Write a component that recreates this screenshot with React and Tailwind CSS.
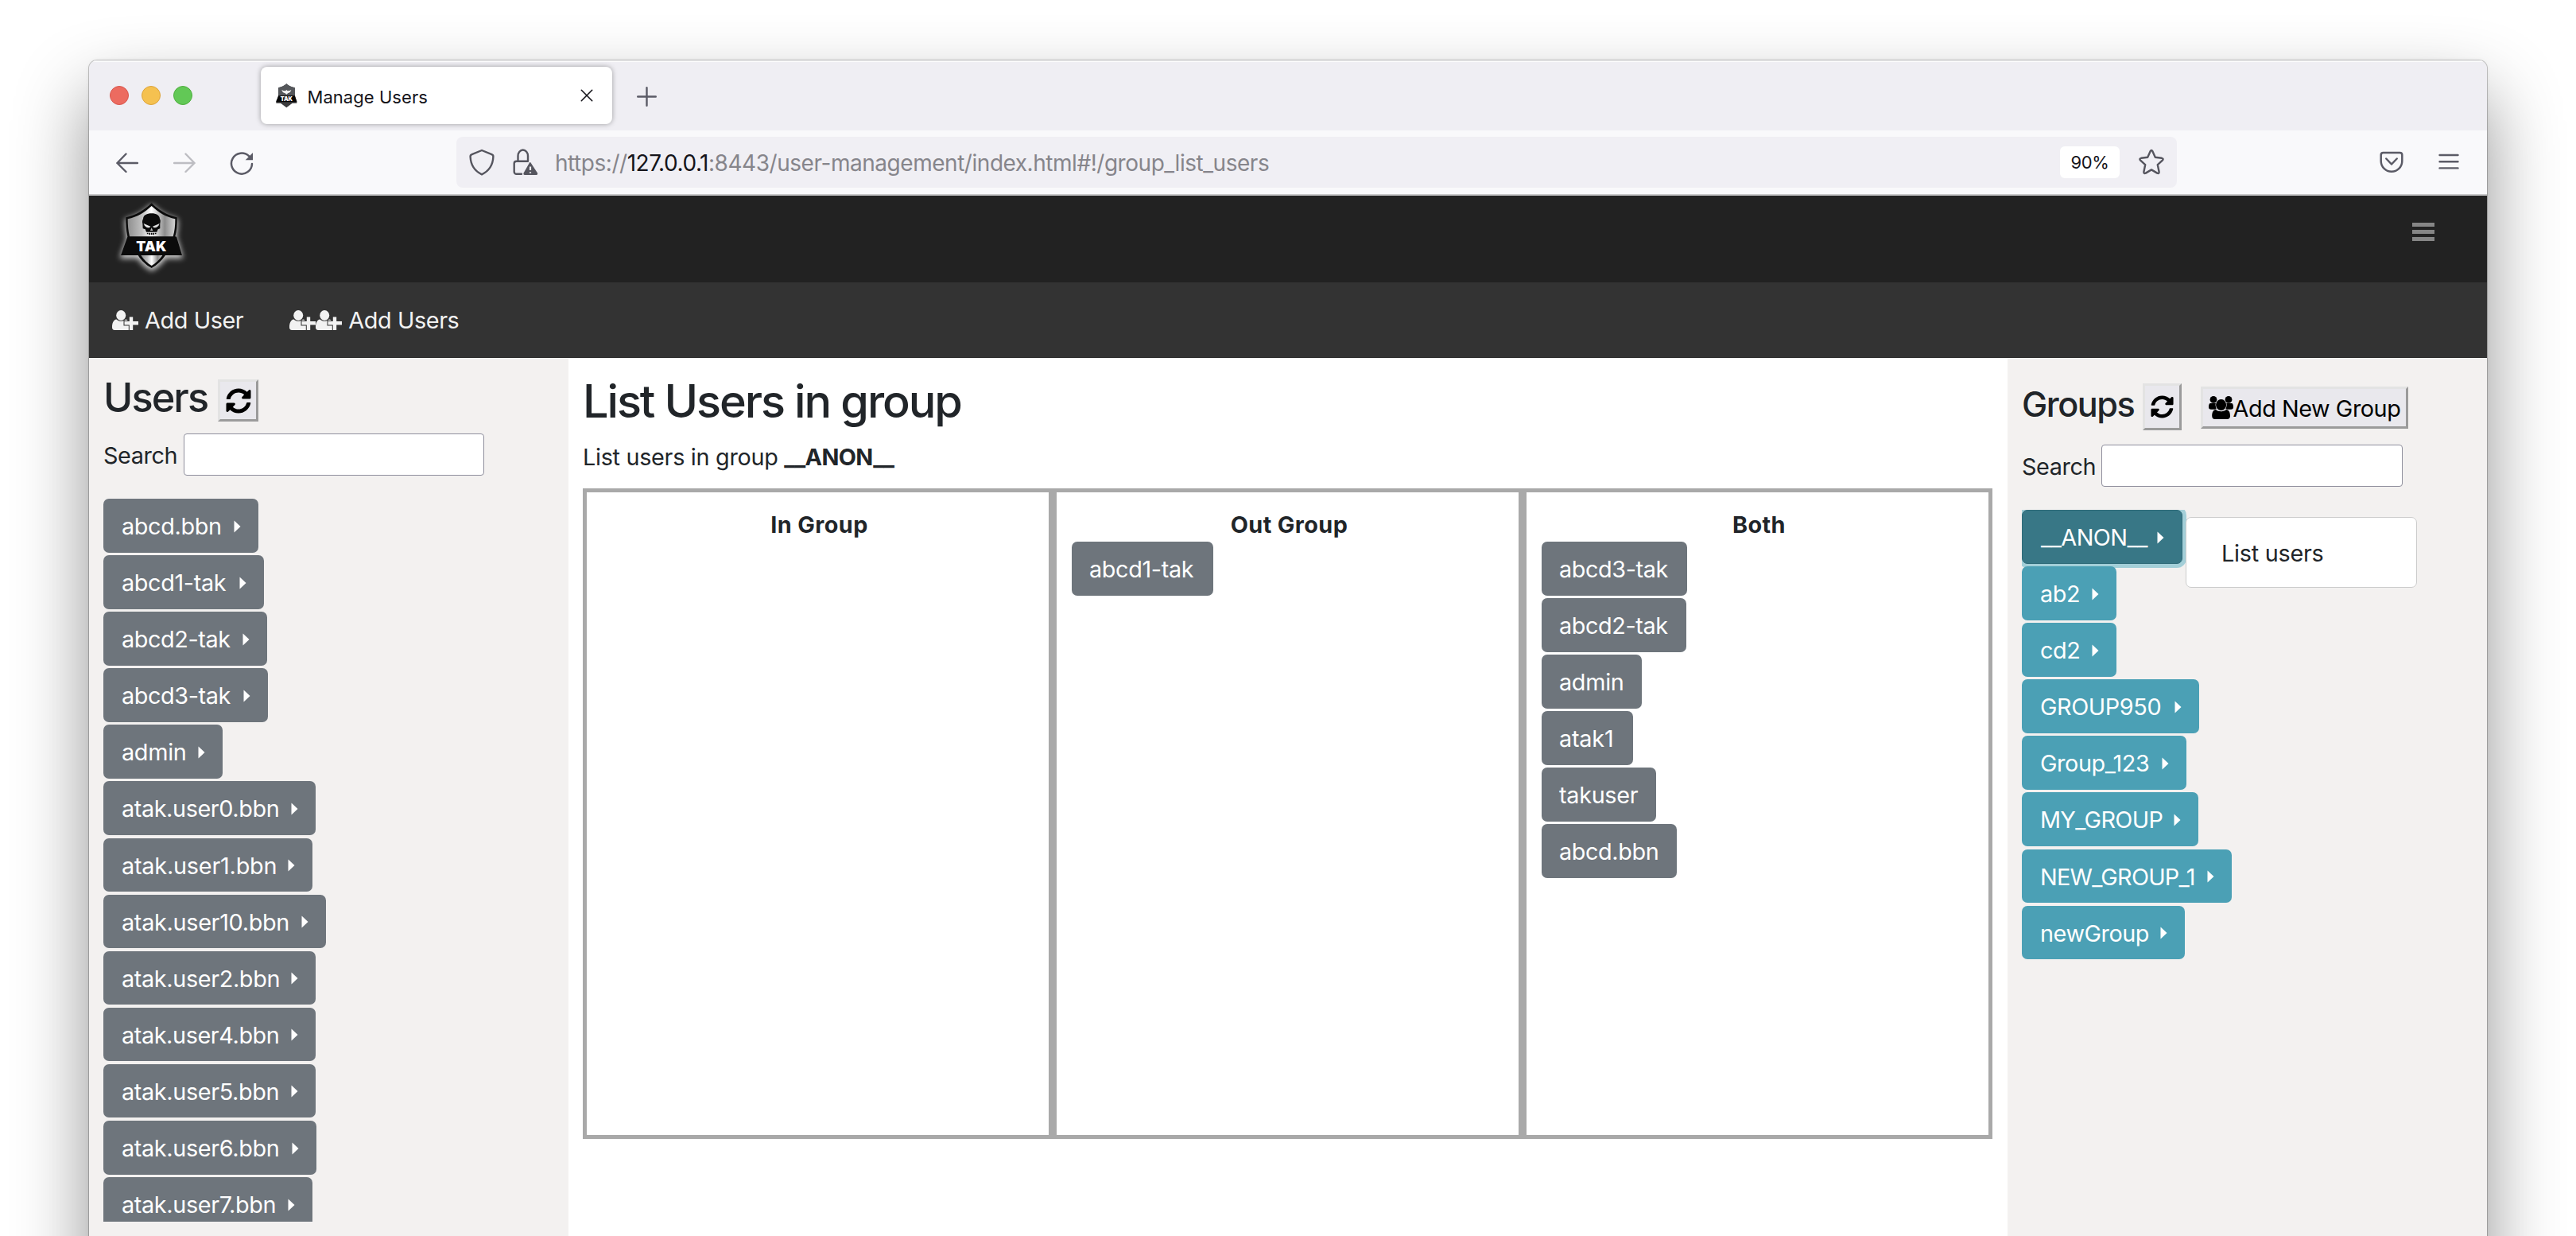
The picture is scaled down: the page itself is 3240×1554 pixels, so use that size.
import React from "react";
import { FaSyncAlt } from "react-icons/fa";

const users = [
  ["abcd.bbn", "w-[195px] tracking-[-0.35px]"],
  ["abcd1-tak", "w-[202px] tracking-[-0.35px]"],
  ["abcd2-tak", "w-[206px] tracking-[-0.4px]"],
  ["abcd3-tak", "w-[207px] tracking-[-0.4px]"],
  ["admin", "w-[150px] tracking-[-0.3px]"],
  ["atak.user0.bbn", "w-[267px] tracking-[-0.4px]"],
  ["atak.user1.bbn", "w-[263px] tracking-[-0.2px]"],
  ["atak.user10.bbn", "w-[280px] tracking-[-0.3px]"],
  ["atak.user2.bbn", "w-[267px] tracking-[-0.35px]"],
  ["atak.user4.bbn", "w-[267px] tracking-[-0.4px]"],
  ["atak.user5.bbn", "w-[267px] tracking-[-0.35px]"],
  ["atak.user6.bbn", "w-[268px] tracking-[-0.35px]"],
  ["atak.user7.bbn", "w-[263px] tracking-[-0.35px]"],
];

const groups = [
  ["__ANON__", "w-[202px] tracking-[-0.5px]", true],
  ["ab2", "w-[119px] tracking-[-0.4px]"],
  ["cd2", "w-[119px] tracking-[-0.4px]"],
  ["GROUP950", "w-[223px] tracking-[-0.4px]"],
  ["Group_123", "w-[207px] tracking-[-0.4px]"],
  ["MY_GROUP", "w-[222px] tracking-[-0.65px]"],
  ["NEW_GROUP_1", "w-[264px] tracking-[-0.75px]"],
  ["newGroup", "w-[205px] tracking-[-0.45px]"],
];

const columns = [
  ["In Group", []],
  ["Out Group", [["abcd1-tak", "w-[178px] tracking-[-0.35px]"]]],
  [
    "Both",
    [
      ["abcd3-tak", "w-[183px] tracking-[-0.4px]"],
      ["abcd2-tak", "w-[182px] tracking-[-0.4px]"],
      ["admin", "w-[126px] tracking-[-0.3px]"],
      ["atak1", "w-[115px] tracking-[-0.2px]"],
      ["takuser", "w-[144px] tracking-[-0.3px]"],
      ["abcd.bbn", "w-[170px] tracking-[-0.4px]"],
    ],
  ],
];

function Caret() {
  return (
    <svg width="9" height="16" viewBox="0 0 9 16" fill="currentColor">
      <path d="M0.5 0.5 8.5 8 0.5 15.5Z" />
    </svg>
  );
}

function Logo() {
  const outline =
    "M182 28C208 54 240 74 278 82C279 110 277 134 271 154L276 155L297 225H234C221 245 202 262 182 273C161 262 143 245 131 225H66L91 155L91 154C86 130 84 106 85 82C124 74 155 54 182 28Z";
  return (
    <svg width="120" height="109" viewBox="0 0 360 327" className="overflow-visible">
      <defs>
        <linearGradient id="steel" x1="0" x2="1">
          <stop offset="0" stopColor="#8f8f8f" />
          <stop offset="0.3" stopColor="#c0c0c0" />
          <stop offset="0.5" stopColor="#ffffff" />
          <stop offset="0.78" stopColor="#8c8c8c" />
          <stop offset="1" stopColor="#d5d5d5" />
        </linearGradient>
        <filter id="glow" x="-30%" y="-30%" width="160%" height="160%">
          <feGaussianBlur stdDeviation="11" />
        </filter>
      </defs>
      <path d={outline} fill="#fff" stroke="#fff" strokeWidth="6" opacity="0.8" transform="translate(0 8)" filter="url(#glow)" />
      <path d={outline} fill="#0b0b0b" />
      <path d="M182 39C207 62 236 81 271 88C271 114 269 134 263 154H99C94 134 92 112 92 88C128 81 157 62 182 39Z" fill="url(#steel)" />
      <path d="M142 225H223C211 242 198 255 182 264C166 255 153 242 142 225Z" fill="url(#steel)" />
      <path d="M148 106C146 99 147 92 150 88C151 73 164 67 182 67C200 67 212 74 213 88C216 92 216 98 214 106V124L206 127L202 137H162L158 127L149 124Z" fill="#0b0b0b" />
      <path d="M167 140V145M174.5 140V148M182 140V148M189.500 140V148M197 140V145" stroke="#0b0b0b" strokeWidth="5" />
      <path d="M152 105L178 116C173 124 158 123 152 105Z" fill="#e8e8e8" />
      <path d="M212 105L186 116C191 124 206 123 212 105Z" fill="#dcdcdc" />
      <path d="M182 121L187 132H177Z" fill="#b9b9b9" />
      <text x="124" y="209" textLength="114" lengthAdjust="spacingAndGlyphs" fontFamily="Inter, sans-serif" fontWeight="900" fontSize="53" fill="#fff">
        TAK
      </text>
    </svg>
  );
}

function Favicon() {
  return (
    <svg width="27" height="31" viewBox="0 0 81 93">
      <path d="M40 1C48 9 60 14 72 16V50L79 66V74H62L40 91L18 74H1V66L9 50V16C20 14 32 9 40 1Z" fill="#3b3b3d" />
      <path d="M40 1C48 9 60 14 72 16V46H9V16C20 14 32 9 40 1Z" fill="#55575b" />
      <path d="M22 24C28 28 34 28 37 27L40 24L43 27C46 28 52 28 58 24C56 32 50 36 46 36L40 41L34 36C29 36 24 32 22 24Z" fill="#f3f3f3" />
      <path d="M9 46H72L79 70H1Z" fill="#060606" />
      <text x="17" y="65" textLength="46" lengthAdjust="spacingAndGlyphs" fontFamily="Inter, sans-serif" fontWeight="900" fontSize="21" fill="#fff">
        TAK
      </text>
    </svg>
  );
}

function UserPlus() {
  return (
    <svg width="33" height="25" viewBox="0 0 33 25" fill="#f2f2f2">
      <ellipse cx="11.2" cy="6.5" rx="6" ry="6.5" />
      <path d="M5.5 11.5C8.5 14.6 14 14.6 17 11.5C19.5 11.8 21 14 21.6 17V25H3C1 25 0 23.6 0 21.6C0 16 1.8 12 5.5 11.5Z" />
      <path d="M21.8 8.500H26.2V14H33V18.500H26.2V25H21.8V18.500H15.500V14H21.8Z" stroke="#333" strokeWidth="2" paintOrder="stroke" />
    </svg>
  );
}

function GroupIcon() {
  return (
    <svg width="31" height="29" viewBox="0 0 31 29" fill="#000">
      <circle cx="6" cy="4.4" r="4.4" />
      <circle cx="25" cy="4.4" r="4.4" />
      <path d="M2 9H9.5V16.8H3C1 16.8 0 15.8 0 14C0 11.5 .4 9.4 2 9Z" />
      <path d="M29 9H21.5V16.8H28C30 16.8 31 15.8 31 14C31 11.5 30.6 9.4 29 9Z" />
      <g stroke="#e9e8ed" strokeWidth="1.2" paintOrder="stroke">
        <path d="M9 17C12 20 19 20 22 17C25.5 17.3 27 20.5 27 25C27 27.5 25.6 29 23.4 29H7.8C5.5 29 4.2 27.5 4.2 25C4.2 20.5 5.6 17.3 9 17Z" />
        <ellipse cx="15.6" cy="11" rx="6.5" ry="7" />
      </g>
    </svg>
  );
}

const bevel =
  "flex items-center justify-center bg-[#e9e8ed] text-black border-[3px] border-t-[#e3e3e3] border-l-[#e3e3e3] border-r-[#9b9b9b] border-b-[#9b9b9b]";

function TabStrip() {
  return (
    <div className="flex h-[88px] shrink-0 items-start bg-[#efeef3] pl-[26px] pt-2 shadow-[inset_0_2px_0_#fafafb]">
      <div className="mt-6 flex gap-4">
        <span className="h-6 w-6 rounded-full border border-[#d9564d] bg-[#ec6b60]" />
        <span className="h-6 w-6 rounded-full border border-[#dda43c] bg-[#f5c150]" />
        <span className="h-6 w-6 rounded-full border border-[#4fae3f] bg-[#62c856]" />
      </div>
      <div className="ml-[86px] flex h-[72px] w-[442px] items-center rounded-lg bg-white pl-[18.5px] pr-6 shadow-[0_0_6px_rgba(0,0,0,0.35)]">
        <Favicon />
        <span className="ml-[13px] pt-1 text-[22px] leading-none tracking-[0.05px] text-[#15141a]">Manage Users</span>
        <svg className="ml-auto" width="16" height="16" viewBox="0 0 16 16" stroke="#15141a" strokeWidth="1.6" strokeLinecap="round">
          <path d="M1.3 1.3 14.7 14.7M14.7 1.3 1.3 14.7" />
        </svg>
      </div>
      <svg className="ml-[31px] mt-[25px]" width="25" height="25" viewBox="0 0 25 25" stroke="#5b5b66" strokeWidth="2.4" strokeLinecap="round">
        <path d="M12.5 1.2V23.8M1.2 12.5H23.8" />
      </svg>
    </div>
  );
}

function Toolbar() {
  return (
    <div className="flex h-[82px] shrink-0 items-center border-b-2 border-[#c8c8c9] bg-[#f9f9fb] pl-[34px]">
      <svg width="28" height="26" viewBox="0 0 28 26" fill="none" stroke="#5b5b66" strokeWidth="2.4" strokeLinecap="round" strokeLinejoin="round">
        <path d="M27 14H1.4M12.5 2.5 1.4 14 12.5 25" />
      </svg>
      <svg className="ml-11" width="28" height="26" viewBox="0 0 28 26" fill="none" stroke="#bdbdc2" strokeWidth="2.4" strokeLinecap="round" strokeLinejoin="round">
        <path d="M1 14H26.6M15.5 2.5 26.6 14 15.5 25" />
      </svg>
      <svg className="ml-[43px] mt-0.5" width="30" height="30" viewBox="0 0 30 30" fill="none" stroke="#5b5b66" strokeWidth="2.5" strokeLinecap="round">
        <path d="M28 16A13 13 0 1 1 24 6.2" />
        <path d="M29 2V11.3H19.7Z" fill="#5b5b66" stroke="none" />
      </svg>
      <div className="ml-[255px] flex h-16 w-[2164px] items-center rounded-lg bg-[#f0eff4] pl-4 pr-[15px]">
        <svg width="32" height="34" viewBox="0 0 32 34" fill="none" stroke="#55555e" strokeWidth="2.4" strokeLinejoin="round">
          <path d="M16 2 28.5 7.2C30 7.8 30.5 8.6 30.4 10C30 19 26 27.5 16 32.3C6 27.5 2 19 1.6 10C1.5 8.6 2 7.8 3.5 7.2Z" />
        </svg>
        <svg className="ml-[23px]" width="32" height="34" viewBox="0 0 32 34" fill="none">
          <path d="M6.5 15.5V9A6.2 7.4 0 0 1 19 9V15.5M11 31.8H4.5A2.8 2.8 0 0 1 1.7 29V18.6A2.8 2.8 0 0 1 4.5 15.8H19" stroke="#55555e" strokeWidth="2.4" strokeLinecap="round" />
          <path d="M22.5 17.5 31 30.5Q31.6 33 29.5 33H15Q13 33 13.6 30.5L21 17.5Q21.8 16.6 22.5 17.5Z" fill="#55555e" />
          <path d="M22 22.5V27M22 29.3V30.8" stroke="#f0eff4" strokeWidth="2.2" />
        </svg>
        <span className="ml-[21px] whitespace-nowrap pt-0.5 text-[28px] leading-none tracking-[-0.46px] text-[#86858b]">
          https://<span className="text-[#15141a]">127.0.0.1</span>:8443/user-management/index.html#!/group_list_users
        </span>
        <span className="ml-auto flex h-10 w-[75px] items-center justify-center rounded-md bg-white pt-px text-[22px] tracking-[-0.3px] text-[#15141a]">90%</span>
        <svg className="ml-[23px]" width="34" height="34" viewBox="0 0 34 34" fill="none" stroke="#55555e" strokeWidth="2.4" strokeLinejoin="round">
          <path d="M15.6 3.2Q17 .8 18.4 3.2L21.8 10.8 30 11.8Q32.8 12.4 30.8 14.6L24.8 20.2 26.6 29Q26.8 31.8 24.2 30.6L17 26.4 9.8 30.6Q7.2 31.8 7.4 29L9.2 20.2 3.2 14.6Q1.2 12.4 4 11.8L12.2 10.8Z" />
        </svg>
      </div>
      <svg className="ml-[255px]" width="30" height="28" viewBox="0 0 30 28" fill="none" stroke="#5b5b66" strokeWidth="2.5" strokeLinecap="round" strokeLinejoin="round">
        <path d="M4.5 2H25.5Q28.3 2 28.3 4.8V12.5A13.3 13.3 0 0 1 1.7 12.5V4.8Q1.7 2 4.5 2Z" />
        <path d="M8.3 9.5 15 16.5 21.7 9.5" />
      </svg>
      <svg className="ml-[44px]" width="26" height="22" viewBox="0 0 26 22" stroke="#5b5b66" strokeWidth="2.4" strokeLinecap="round">
        <path d="M1.5 2H24.5M1.5 10.2H24.5M1.5 18.4H24.5" />
      </svg>
    </div>
  );
}

function SideButton({ label, size, tone }) {
  return (
    <button className={"mb-[3.6px] flex h-[67.5px] shrink-0 items-center justify-between rounded-[7px] pl-[23px] pr-[22.5px] pt-[1.5px] text-white " + size + " " + tone}>
      <span>{label}</span>
      <Caret />
    </button>
  );
}

export default function App() {
  return (
    <div className="h-[1554px] w-[3240px] overflow-hidden bg-white pl-[112px] pt-[76px] font-[Inter,sans-serif] text-[28.8px] leading-[43px] text-[#212529]">
      <div className="h-[1700px] w-[3016px] rounded-[10px] shadow-[0_0_0_1px_rgba(0,0,0,0.2),0_0_5px_rgba(0,0,0,0.08),0_44px_92px_rgba(0,0,0,0.43)]">
        <div className="flex h-[1478px] flex-col overflow-hidden rounded-t-[10px]">
          <TabStrip />
          <Toolbar />
          <header className="flex h-[109px] shrink-0 items-start justify-between bg-[#222] pl-[18px] pr-[66px]">
            <Logo />
            <div className="mt-[34px] flex flex-col gap-1">
              <span className="h-[5px] w-7 bg-[#868686]" />
              <span className="h-[5px] w-7 bg-[#868686]" />
              <span className="h-[5px] w-7 bg-[#868686]" />
            </div>
          </header>
          <nav className="flex h-[95px] shrink-0 items-center border-b border-[#2a2a2a] bg-[#333] pl-[29px] tracking-[-0.4px] text-[#f2f2f2]">
            <UserPlus />
            <span className="ml-2 pt-px">Add User</span>
            <span className="ml-[58px] flex">
              <UserPlus />
              <UserPlus />
            </span>
            <span className="ml-2 pt-px">Add Users</span>
          </nav>

          <div className="flex flex-1">
            <aside className="w-[603px] bg-[#f3f1f0] pl-[18px] pt-5">
              <div className="flex items-start">
                <h2 className="w-[144px] text-[50.4px] leading-[60px] font-[550] tracking-[-1.9px]">Users</h2>
                <button className={bevel + " mt-[7px] h-[53px] w-[51px]"}>
                  <FaSyncAlt size={32} />
                </button>
              </div>
              <div className="mt-[15px] flex items-center">
                <label className="w-[101px] pt-px tracking-[-0.4px]">Search</label>
                <input className="h-[53px] w-[378px] rounded-[4px] border border-[#8f8f9d] bg-white" />
              </div>
              <div className="mt-[29px] flex h-[909px] flex-col items-start overflow-hidden">
                {users.map(([label, size]) => (
                  <SideButton key={label} label={label} size={size} tone="bg-[#6e757c]" />
                ))}
              </div>
            </aside>

            <main className="w-[1810px] bg-white pl-[18px] pt-5">
              <h1 className="text-[57.6px] leading-[69px] font-[550] tracking-[-2.1px]">List Users in group</h1>
              <p className="mt-[14px] tracking-[-0.3px]">
                List users in group <b className="tracking-[-0.6px]">__ANON__</b>
              </p>
              <div className="mt-[18px] flex">
                {columns.map(([title, members]) => (
                  <section key={title} className="h-[818px] w-[591px] border-[5px] border-[#a9a9a9] px-[19px] pt-[19px]">
                    <h3 className="pl-1 text-center font-bold tracking-[0.4px]">{title}</h3>
                    <div className="flex flex-col items-start gap-[3.6px]">
                      {members.map(([label, size]) => (
                        <button key={label} className={"flex h-[67.5px] items-center rounded-[7px] bg-[#6e757c] pl-[22px] pt-px text-white " + size}>
                          {label}
                        </button>
                      ))}
                    </div>
                  </section>
                ))}
              </div>
            </main>

            <aside className="w-[603px] bg-[#f3f1f0] pl-[18px] pt-7">
              <div className="flex h-[63px] items-start">
                <h2 className="w-[152px] text-[43.2px] leading-[60px] font-[550] tracking-[-1.5px]">Groups</h2>
                <button className={bevel + " mt-1 h-[59px] w-[49px]"}>
                  <FaSyncAlt size={29} />
                </button>
                <button className={bevel + " mt-2 ml-6 h-[53px] w-[261px] tracking-[-0.45px]"}>
                  <GroupIcon />
                  <span className="pt-0.5">Add New Group</span>
                </button>
              </div>
              <div className="mt-[18px] flex items-center">
                <label className="w-[100px] pt-px tracking-[-0.4px]">Search</label>
                <input className="h-[53px] w-[379px] rounded-[4px] border border-[#8f8f9d] bg-white" />
              </div>
              <div className="relative mt-[29px]">
                <div className="flex flex-col items-start overflow-hidden">
                  {groups.map(([label, size, active]) => (
                    <SideButton
                      key={label}
                      label={label}
                      size={size}
                      tone={active ? "bg-[#387786] border border-[#2f6b79] shadow-[0_0_0_5px_#a3cfd8]" : "bg-[#4ba0b5]"}
                    />
                  ))}
                </div>
                <div className="absolute left-[206px] top-[9px] flex h-[89px] w-[291px] items-center rounded-[7px] border border-[#cccccc] bg-white pl-[44px] pt-0.5 tracking-[-0.25px]">
                  List users
                </div>
              </div>
            </aside>
          </div>
        </div>
      </div>
    </div>
  );
}
